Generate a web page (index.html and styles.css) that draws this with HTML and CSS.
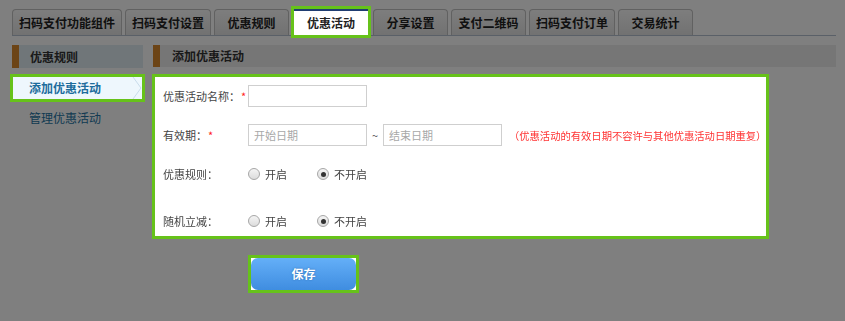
FILE: index.html
```html
<!DOCTYPE html>
<html lang="zh-CN">
<head>
<meta charset="utf-8">
<title>优惠活动</title>
<link rel="stylesheet" href="styles.css">
</head>
<body>
<div class="tabs">
  <div class="tab">扫码支付功能组件</div>
  <div class="tab">扫码支付设置</div>
  <div class="tab">优惠规则</div>
  <div class="tab active hl">优惠活动</div>
  <div class="tab">分享设置</div>
  <div class="tab">支付二维码</div>
  <div class="tab">扫码支付订单</div>
  <div class="tab">交易统计</div>
</div>
<div class="main">
  <div class="side">
    <div class="side-head">优惠规则</div>
    <div class="side-item current hl">添加优惠活动
      <svg class="chev" width="10" height="22" viewBox="0 0 10 22"><polyline points="1,0 9,11 1,22" fill="none" stroke="#c9dceb" stroke-width="1"/></svg>
    </div>
    <div class="side-item">管理优惠活动</div>
  </div>
  <div class="content">
    <div class="content-head">添加优惠活动</div>
    <div class="panel hl">
      <div class="row r1">
        <div class="label"><span class="lt">优惠活动名称：</span><span class="req">*</span></div>
        <input class="inp" type="text">
      </div>
      <div class="row r2">
        <div class="label"><span class="lt">有效期：</span><span class="req">*</span></div>
        <input class="inp" type="text" placeholder="开始日期">
        <span class="tilde">~</span>
        <input class="inp" type="text" placeholder="结束日期">
        <span class="note">（优惠活动的有效日期不容许与其他优惠活动日期重复）</span>
      </div>
      <div class="row r3">
        <div class="label">优惠规则：</div>
        <span class="radio"></span><span class="opt">开启</span>
        <span class="radio on"></span><span class="opt">不开启</span>
      </div>
      <div class="row r4">
        <div class="label">随机立减：</div>
        <span class="radio"></span><span class="opt">开启</span>
        <span class="radio on"></span><span class="opt">不开启</span>
      </div>
    </div>
    <div class="btn-wrap hl"><div class="btn">保存</div></div>
  </div>
</div>
<div class="overlay"></div>
</body>
</html>
```
FILE: styles.css
```css
html, body {
  margin: 0;
  padding: 0;
  background: #fff;
  font-family: "Noto Sans CJK SC", "Microsoft YaHei", sans-serif;
  font-size: 12px;
  color: #333;
  width: 845px;
  height: 321px;
  overflow: hidden;
}

.overlay {
  position: fixed;
  left: 0;
  top: 0;
  right: 0;
  bottom: 0;
  background: rgba(0, 0, 0, 0.5);
  z-index: 1;
}

.hl {
  position: relative;
  z-index: 2;
  outline: 3px solid #66c21a;
}

/* tabs */
.tabs {
  display: flex;
  align-items: flex-end;
  gap: 3px;
  margin: 0 9px 0 12px;
  padding-top: 9px;
  height: 26px;
  border-bottom: 1px solid #b4c0d0;
}
.tab {
  height: 25px;
  line-height: 25px;
  padding: 0 6px;
  min-width: 61px;
  text-align: center;
  border: 1px solid #c2c2c2;
  border-bottom: none;
  border-radius: 4px 4px 0 0;
  background: linear-gradient(#fbfbfb, #e4e4e4);
  font-weight: bold;
  color: #222;
  box-sizing: content-box;
}
.tab.active {
  background: #fff;
  border: none;
  border-top: 2px solid #1f3d72;
  height: 24px;
  line-height: 24px;
  width: 74px;
  min-width: 0;
  padding: 0;
  margin: 0 2px 0 2px;
  border-radius: 0;
}

/* main */
.main {
  display: flex;
  gap: 10px;
  margin: 9px 9px 0 12px;
}
.side {
  width: 131px;
  flex: none;
}
.side-head {
  height: 23px;
  line-height: 23px;
  border-left: 7px solid #d8892c;
  background: #e1edf3;
  padding-left: 11px;
  font-weight: bold;
  color: #333;
}
.side-item {
  height: 22px;
  line-height: 22px;
  margin: 8px 1px 0 1px;
  padding-left: 16px;
  color: #2574a4;
}
.side-item.current {
  margin-top: 9px;
  background: #eef7fd;
  font-weight: bold;
  color: #1c6c9c;
}
.chev {
  position: absolute;
  right: 0;
  top: 0;
}

.content {
  flex: 1;
}
.content-head {
  height: 22px;
  line-height: 22px;
  border-left: 7px solid #d8892c;
  background: #ededed;
  padding-left: 12px;
  font-weight: bold;
  color: #333;
}
.panel {
  margin: 10px 0 0 2px;
  width: 611px;
  height: 159px;
  background: #fff;
  padding: 8px 0 0 8px;
  box-sizing: border-box;
  font-size: 11px;
  color: #444;
}
.row {
  display: flex;
  align-items: center;
  height: 22px;
}
.r2 { margin-top: 17px; }
.r3 { margin-top: 17px; }
.r4 { margin-top: 25px; }
.label {
  width: 85px;
  flex: none;
  display: flex;
  align-items: center;
}
.lt {
  letter-spacing: 0;
}
.req {
  color: #f22;
  margin-left: 1px;
}
.inp {
  width: 119px;
  height: 22px;
  box-sizing: border-box;
  border: 1px solid #cfcfcf;
  margin: 0;
  padding: 0 5px;
  font-family: inherit;
  font-size: 11px;
  outline: none;
}
.inp::placeholder {
  color: #a8a8a8;
}
.tilde {
  width: 16px;
  text-align: center;
  color: #555;
}
.note {
  margin-left: 7px;
  color: #f33;
  font-size: 10.3px;
}
.radio {
  width: 10px;
  height: 10px;
  border: 1px solid #a6a6a6;
  border-radius: 50%;
  background: linear-gradient(#f4f4f4, #dcdcdc);
  display: flex;
  align-items: center;
  justify-content: center;
  margin-right: 5px;
  flex: none;
}
.radio.on::after {
  content: "";
  width: 5px;
  height: 5px;
  border-radius: 50%;
  background: #333;
}
.opt {
  width: 52px;
}

.btn-wrap {
  margin: 22px 0 0 98px;
  width: 105px;
  height: 32px;
  background: #fff;
}
.btn {
  height: 32px;
  line-height: 32px;
  border-radius: 7px;
  background: linear-gradient(#64aff8, #3f8de0);
  color: #fff;
  font-weight: bold;
  font-size: 12px;
  text-align: center;
  text-shadow: 0 0 2px #2a6ab0;
}
```
